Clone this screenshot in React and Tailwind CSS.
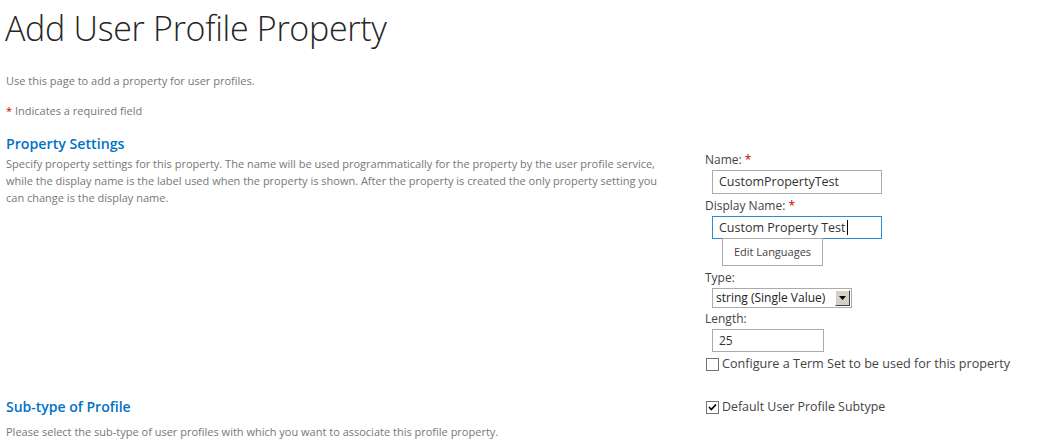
import React from "react";

const font = { fontFamily: '"Open Sans", "Segoe UI", sans-serif' };

function Req({ className = "" }) {
  return <span className={"font-normal text-[#bf0000] " + className}>*</span>;
}

function Box({ checked }) {
  return (
    <span className="inline-flex h-[13px] w-[13px] shrink-0 items-center justify-center border border-[#707070] bg-white">
      {checked && (
        <svg width="9" height="9" viewBox="0 0 9 9">
          <path d="M1 4 L3.3 6.5 L8 1.5" stroke="#000" strokeWidth="1.8" fill="none" />
        </svg>
      )}
    </span>
  );
}

export default function App() {
  return (
    <div className="h-[447px] w-[1047px] overflow-hidden bg-white text-[#444]" style={font}>
      <h1 className="pl-[5px] pt-[6px] text-[34px] font-light leading-[44px] tracking-[-0.3px] text-[#262626]">
        Add User Profile Property
      </h1>
      <p className="mt-[24px] pl-[6px] text-[11px] leading-[14px] text-[#777]">
        Use this page to add a property for user profiles.
      </p>
      <p className="mt-[16px] pl-[6px] text-[11px] leading-[14px] text-[#777]">
        <Req /> Indicates a required field
      </p>

      <div className="mt-[17px] flex">
        <div className="w-[705px] pl-[6px]">
          <h2 className="text-[14.2px] font-semibold leading-[18px] text-[#0072c6]">Property Settings</h2>
          <p className="mt-[2px] w-[672px] text-[11px] leading-[17px] text-[#777]">
            Specify property settings for this property. The name will be used programmatically for the property by the user profile service, while the display name is the label used when the property is shown. After the property is created the only property setting you can change is the display name.
          </p>
        </div>
        <div className="flex flex-col pt-[17px] text-[12px] leading-[16px] text-[#444]">
          <div>
            Name: <Req />
          </div>
          <div className="ml-[7px] mt-[2px] flex h-[24px] w-[170px] items-center border border-[#ababab] px-[6px] text-[12.5px] text-[#333]">
            CustomPropertyTest
          </div>
          <div className="mt-[4px]">
            Display Name: <Req />
          </div>
          <div className="ml-[7px] mt-[2px] flex h-[23px] w-[170px] items-center border border-[#2a8dd4] px-[6px] text-[12.5px] text-[#333]">
            Custom Property Test<span className="ml-[1px] inline-block h-[15px] w-[1px] bg-black" />
          </div>
          <div className="ml-[17px] -mt-[1px] flex h-[28px] w-[101px] items-center justify-center border border-[#ababab] text-[11px] text-[#444]">
            Edit Languages
          </div>
          <div className="mt-[4px]">Type:</div>
          <div className="ml-[7px] mt-[2px] flex h-[20px] w-[140px] items-center justify-between border border-[#ababab] pl-[3px] pr-[1px] text-[12px] text-[#222]">
            <span>string (Single Value)</span>
            <span className="flex h-[16px] w-[15px] items-center justify-center border border-t-white border-l-white border-b-[#404040] border-r-[#404040] bg-[#d4d0c8]">
              <svg width="7" height="4" viewBox="0 0 7 4">
                <path d="M0 0 H7 L3.5 4 Z" fill="#000" />
              </svg>
            </span>
          </div>
          <div className="mt-[3px]">Length:</div>
          <div className="ml-[7px] mt-[2px] flex h-[23px] w-[112px] items-center border border-[#ababab] px-[6px] text-[12px] text-[#333]">
            25
          </div>
          <label className="ml-[1px] mt-[4px] flex items-center gap-[3px]">
            <Box />
            <span className="text-[12.6px]">Configure a Term Set to be used for this property</span>
          </label>
        </div>
      </div>

      <div className="mt-[26px] flex">
        <div className="w-[705px] pl-[6px]">
          <h2 className="text-[14px] font-semibold leading-[18px] text-[#0072c6]">Sub-type of Profile</h2>
          <p className="mt-[9px] text-[11px] leading-[14px] text-[#777]">
            Please select the sub-type of user profiles with which you want to associate this profile property.
          </p>
        </div>
        <label className="ml-[1px] mt-[1px] flex h-[16px] items-center gap-[3px] text-[12.4px] text-[#444]">
          <Box checked />
          <span>Default User Profile Subtype</span>
        </label>
      </div>
    </div>
  );
}
